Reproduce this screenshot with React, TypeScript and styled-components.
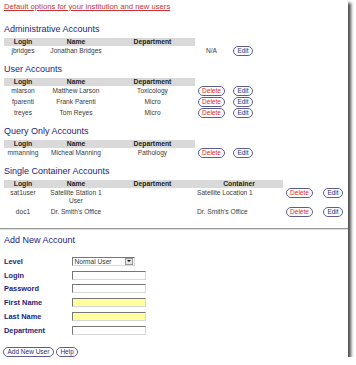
import styled, { createGlobalStyle } from 'styled-components';

const GlobalStyle = createGlobalStyle`
  html, body {
    margin: 0;
    padding: 0;
    background: #fff;
  }
  body {
    font-family: "Liberation Sans", Arial, sans-serif;
  }
`;

interface Account {
  login: string;
  name: string;
  dept?: string;
  container?: string;
}

type ActionKind = 'na' | 'delete';

const BASE_COLS = '38px 68px 85px';

const admins: Account[] = [{ login: 'jbridges', name: 'Jonathan Bridges' }];

const users: Account[] = [
  { login: 'mlarson', name: 'Matthew Larson', dept: 'Toxicology' },
  { login: 'fparenti', name: 'Frank Parenti', dept: 'Micro' },
  { login: 'treyes', name: 'Tom Reyes', dept: 'Micro' },
];

const queryOnly: Account[] = [
  { login: 'mmanning', name: 'Micheal Manning', dept: 'Pathology' },
];

const singles: Account[] = [
  {
    login: 'sat1user',
    name: 'Satellite Station 1 User',
    container: 'Satellite Location 1',
  },
  { login: 'doc1', name: "Dr. Smith's Office", container: "Dr. Smith's Office" },
];

const AccountTable = ({
  rows,
  action,
  withContainer,
}: {
  rows: Account[];
  action: ActionKind;
  withContainer?: boolean;
}) => {
  const cols = withContainer
    ? `${BASE_COLS} 88px 33px 34px`
    : `${BASE_COLS} 33px 30px`;

  return (
    <Table $cols={cols}>
      <HeadCell>Login</HeadCell>
      <HeadCell>Name</HeadCell>
      <HeadCell>Department</HeadCell>
      {withContainer && <HeadCell>Container</HeadCell>}
      <span />
      <span />
      {rows.map((r) => (
        <Row key={r.login}>
          <Cell>{r.login}</Cell>
          <Cell>{r.name}</Cell>
          <Cell>{r.dept}</Cell>
          {withContainer && <Cell $left>{r.container}</Cell>}
          <ActionCell>
            {action === 'na' ? <Cell>N/A</Cell> : <PillButton $danger>Delete</PillButton>}
          </ActionCell>
          <ActionCell>
            <PillButton>Edit</PillButton>
          </ActionCell>
        </Row>
      ))}
    </Table>
  );
};

const App = () => {
  return (
    <>
      <GlobalStyle />
      <Page>
        <TopLink href="#">Default options for your institution and new users</TopLink>

        <Section>
          <Heading>Administrative Accounts</Heading>
          <AccountTable rows={admins} action="na" />
        </Section>

        <Section>
          <Heading>User Accounts</Heading>
          <AccountTable rows={users} action="delete" />
        </Section>

        <Section>
          <Heading>Query Only Accounts</Heading>
          <AccountTable rows={queryOnly} action="delete" />
        </Section>

        <Section>
          <Heading>Single Container Accounts</Heading>
          <AccountTable rows={singles} action="delete" withContainer />
        </Section>

        <Divider />

        <FormSection>
          <Heading>Add New Account</Heading>
          <FormGrid>
            <Label>Level</Label>
            <SelectBox>
              <span>Normal User</span>
              <SelectArrow />
            </SelectBox>
            <Label>Login</Label>
            <TextInput />
            <Label>Password</Label>
            <TextInput type="password" />
            <Label>First Name</Label>
            <TextInput $required />
            <Label>Last Name</Label>
            <TextInput $required />
            <Label>Department</Label>
            <TextInput />
          </FormGrid>
          <ButtonRow>
            <PillButton>Add New User</PillButton>
            <PillButton>Help</PillButton>
          </ButtonRow>
        </FormSection>
      </Page>
    </>
  );
};

export default App;

const Page = styled.div`
  width: 348px;
  height: 357px;
  box-sizing: border-box;
  padding: 2px 0 0 0;
  background: #fff;
  box-shadow: 3px 3px 3px rgba(0, 0, 0, 0.7);
  color: #333;
  overflow: hidden;
`;

const TopLink = styled.a`
  display: block;
  margin-left: 4px;
  font-size: 7.7px;
  line-height: 10px;
  color: #c8343a;
  text-decoration: underline;
`;

const Section = styled.div`
  padding-left: 4px;
  margin-top: 11.5px;

  & + & {
    margin-top: 7px;
  }
`;

const Heading = styled.h2`
  margin: 0 0 3px 0;
  font-size: 9px;
  line-height: 11px;
  font-weight: normal;
  color: #1c1c80;
`;

const Table = styled.div<{ $cols: string }>`
  display: grid;
  grid-template-columns: ${(p) => p.$cols};
  font-size: 6.6px;
  line-height: 8px;
`;

const HeadCell = styled.div`
  height: 8px;
  background: #d9d9d9;
  font-weight: bold;
  font-size: 6.8px;
  text-align: center;
  color: #222;
`;

const Row = styled.div`
  display: contents;
`;

const Cell = styled.div<{ $left?: boolean }>`
  padding: 1.5px 2px;
  text-align: ${(p) => (p.$left ? 'left' : 'center')};
  color: #3a3a3a;
`;

const ActionCell = styled.div`
  height: 11px;
  display: flex;
  align-items: center;
  justify-content: center;
`;

const PillButton = styled.button<{ $danger?: boolean }>`
  height: 9.5px;
  padding: 0 3.5px;
  border: 1.3px solid #5c5c92;
  border-radius: 6px;
  background: #fff;
  font-family: "Liberation Sans", Arial, sans-serif;
  font-size: 6.5px;
  line-height: 6px;
  color: ${(p) => (p.$danger ? '#e02828' : '#2a2a7a')};
  cursor: pointer;
`;

const Divider = styled.hr`
  margin: 10.5px 0 0 0;
  border: 0;
  border-top: 1px solid #999;
  border-bottom: 1px solid #ddd;
`;

const FormSection = styled.div`
  padding-left: 4px;
  margin-top: 4.5px;

  ${Heading} {
    margin-bottom: 9px;
  }
`;

const FormGrid = styled.div`
  display: grid;
  grid-template-columns: 68px 74px;
  grid-auto-rows: 13.8px;
  align-items: center;
`;

const Label = styled.label`
  font-size: 7.4px;
  font-weight: bold;
  color: #1e1e78;
`;

const TextInput = styled.input<{ $required?: boolean }>`
  width: 74px;
  height: 9px;
  box-sizing: border-box;
  padding: 0;
  border: 1px solid;
  border-color: #777 #d8d8d8 #d8d8d8 #777;
  background: ${(p) => (p.$required ? '#ffff9e' : '#fff')};
  outline: none;
`;

const SelectBox = styled.div`
  width: 63px;
  height: 9px;
  box-sizing: border-box;
  display: flex;
  align-items: center;
  justify-content: space-between;
  border: 1px solid;
  border-color: #777 #d8d8d8 #d8d8d8 #777;
  font-size: 6.6px;
  color: #333;
  padding-left: 1.5px;
`;

const SelectArrow = styled.div`
  width: 8px;
  height: 7px;
  margin-right: 1px;
  background: #e4e4e4;
  border: 0.5px solid #999;
  box-sizing: border-box;
  display: flex;
  align-items: center;
  justify-content: center;

  &::after {
    content: '';
    border-left: 2px solid transparent;
    border-right: 2px solid transparent;
    border-top: 2.5px solid #111;
  }
`;

const ButtonRow = styled.div`
  display: flex;
  gap: 2px;
  margin-top: 10px;
  margin-left: -1px;
`;
